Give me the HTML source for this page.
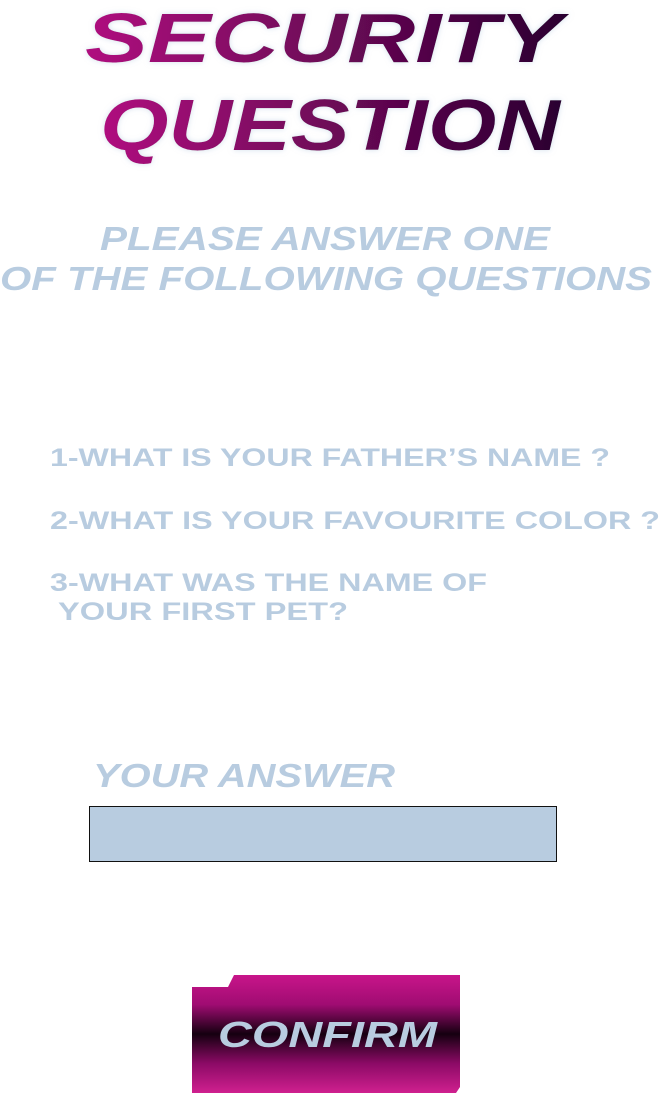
<!DOCTYPE html>
<html><head><meta charset="utf-8"><style>
html,body{margin:0;padding:0;background:#fff;width:660px;height:1098px;overflow:hidden}
svg{display:block}
text{font-family:"Liberation Sans",sans-serif;font-weight:bold}
</style></head><body>
<svg width="660" height="1098" viewBox="0 0 660 1098">
<defs>
<linearGradient id="tg" x1="0" x2="1" y1="0" y2="0">
<stop offset="0" stop-color="#b0107f"/><stop offset="1" stop-color="#2a0030"/>
</linearGradient>
<linearGradient id="bg" x1="0" x2="0" y1="0" y2="1">
<stop offset="0" stop-color="#c8158a"/><stop offset="0.25" stop-color="#a00c72"/>
<stop offset="0.5" stop-color="#150010"/><stop offset="0.75" stop-color="#8c0a66"/>
<stop offset="1" stop-color="#d0208f"/>
</linearGradient>
<filter id="gl" x="-5%" y="-20%" width="110%" height="140%"><feDropShadow dx="0" dy="0" stdDeviation="3" flood-color="#b8cce0" flood-opacity="0.6"/></filter>
</defs>
<g fill="url(#tg)" filter="url(#gl)" font-style="italic">
<text x="85" y="62" font-size="70" textLength="477" lengthAdjust="spacingAndGlyphs">SECURITY</text>
<text x="100" y="150" font-size="72" textLength="460" lengthAdjust="spacingAndGlyphs">QUESTION</text>
</g>
<g fill="#b8cce0">
<text x="100" y="250" font-size="33" font-style="italic" textLength="450" lengthAdjust="spacingAndGlyphs">PLEASE ANSWER ONE</text>
<text x="0" y="290" font-size="33" font-style="italic" textLength="652" lengthAdjust="spacingAndGlyphs">OF THE FOLLOWING QUESTIONS</text>
<text x="50" y="466" font-size="25" textLength="560" lengthAdjust="spacingAndGlyphs">1-WHAT IS YOUR FATHER’S NAME ?</text>
<text x="50" y="529" font-size="25" textLength="610" lengthAdjust="spacingAndGlyphs">2-WHAT IS YOUR FAVOURITE COLOR ?</text>
<text x="50" y="591" font-size="25" textLength="437" lengthAdjust="spacingAndGlyphs">3-WHAT WAS THE NAME OF</text>
<text x="58" y="620" font-size="25" textLength="290" lengthAdjust="spacingAndGlyphs">YOUR FIRST PET?</text>
<text x="93" y="787" font-size="33" font-style="italic" textLength="302" lengthAdjust="spacingAndGlyphs">YOUR ANSWER</text>
</g>
<rect x="89.5" y="806.5" width="467" height="55" fill="#b8cce0" stroke="#111" stroke-width="1"/>
<path d="M192 987 L228 987 L234 975 L460 975 L460 1087 L456 1093 L192 1093 Z" fill="url(#bg)"/>
<text x="218" y="1047" font-size="36" font-style="italic" fill="#b8cce0" textLength="219" lengthAdjust="spacingAndGlyphs">CONFIRM</text>
</svg>
</body></html>
